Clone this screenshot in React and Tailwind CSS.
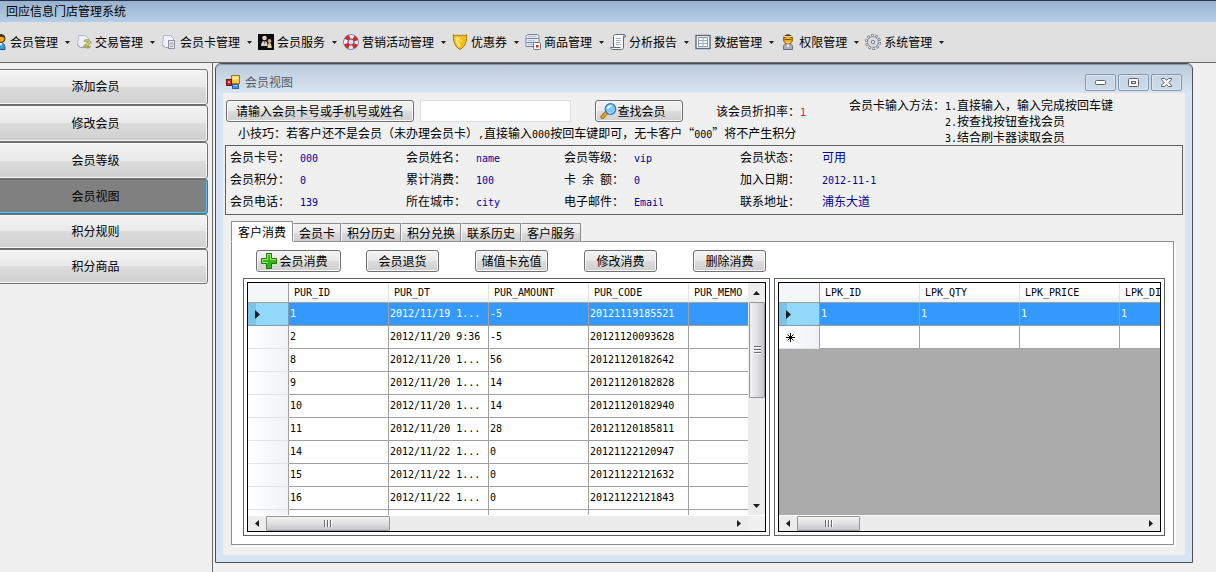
import React, { Fragment, useState } from 'react';

const GroupIcon = () => (
  <svg width="16" height="16" viewBox="0 0 16 16">
    <circle cx="10" cy="4.500" r="4" fill="#f3a51c" stroke="#2a2113" />
    <path d="M6.500 3.500c1-3.500 6.500-3.500 7.300.4-2-1.500-5-1.500-7.300-.4z" fill="#3a2a10" />
    <path d="M5 15.500c0-5 2-6.500 5-6.500s4 1.500 4 6.500z" fill="#3ea0dc" stroke="#184f7c" />
    <path d="M8.500 9l1.500 3L11.500 9z" fill="#fff" />
  </svg>
);

const TradeIcon = () => (
  <svg width="16" height="16" viewBox="0 0 16 16">
    <path d="M2.500 1.500h7l3 3v9h-8l-3-2z" fill="#eef0f8" stroke="#b3b5cc" />
    <path d="M1.500 11l3 2.500h5" fill="none" stroke="#9c9dbb" />
    <path d="M8 6.500c3-2 6-.5 6 1.500h1.500L13 10.500 10.500 8H12c-.5-1-2-1.200-4-.3z" fill="#c9cf5a" stroke="#84883a" strokeWidth=".6" />
    <path d="M15 12c-2 3-5.500 2.500-6 .5H7L10 9.500l2.500 3H11c.8 1 2.500.7 4-.5z" fill="#b9bf46" stroke="#84883a" strokeWidth=".6" />
  </svg>
);

const CardIcon = () => (
  <svg width="16" height="16" viewBox="0 0 16 16">
    <path d="M2.500 1.500h7l3 3v9h-8l-3-2z" fill="#f2f3fa" stroke="#b3b5cc" />
    <path d="M1.500 11l3 2.500h3" fill="none" stroke="#9c9dbb" />
    <rect x="7.500" y="6.500" width="6" height="8" fill="#e8e8f2" stroke="#8e90ae" />
    <path d="M9 9h3M9 12.500h3" stroke="#9a9cb8" />
    <path d="M8 10.500h5" stroke="#d9c46a" strokeWidth="1.500" />
  </svg>
);

const ServiceIcon = () => (
  <svg width="16" height="16" viewBox="0 0 16 16">
    <rect width="16" height="16" fill="#0b0a0c" />
    <circle cx="6.500" cy="4" r="2.300" fill="#e6d3c2" />
    <path d="M3 12c0-3 1-5 3.500-5S9.500 9 9.500 12z" fill="#cfd3dc" />
    <path d="M6 7h1.200l-.3 4z" fill="#4a3b38" />
    <circle cx="11.500" cy="7" r="1.900" fill="#dba77a" />
    <path d="M9.500 14c0-3 .5-5 2-5s2.200 2 2.200 5z" fill="#e8c79c" />
  </svg>
);

const RingIcon = () => (
  <svg width="16" height="16" viewBox="0 0 16 16">
    <circle cx="8" cy="8" r="5.300" fill="none" stroke="#5a5fae" strokeWidth="5" />
    <circle cx="8" cy="8" r="5.300" fill="none" stroke="#f4f2f6" strokeWidth="3.600" />
    <circle cx="8" cy="8" r="5.300" fill="none" stroke="#d3271e" strokeWidth="4" strokeDasharray="4.160 4.160" strokeDashoffset="-2.080" />
    <circle cx="8" cy="8" r="2.900" fill="none" stroke="#7c3a5c" strokeWidth=".7" />
  </svg>
);

const ShieldIcon = () => (
  <svg width="16" height="16" viewBox="0 0 16 16">
    <path d="M1.500.5c1 1 2 1.500 3 .8.8-.6 1.500-.3 2 .4h3c.5-.7 1.200-1 2-.4 1 .7 2 .2 3-.8.500 5.500-.5 11.500-6.500 15C2 12 1 6 1.500.5z" fill="#f2c01b" stroke="#a87400" />
    <path d="M3.500 3.500c1 0 1.500-.3 2-.7.800.8 1.700 1 2.500 1v9.500C4 10.500 3.500 7 3.500 3.500z" fill="#ffe678" />
    <path d="M5 6h6l-3 5z" fill="#f7d03a" />
  </svg>
);

const GoodsIcon = () => (
  <svg width="16" height="16" viewBox="0 0 16 16">
    <path d="M2.500.5h10l1.500 2v10h-13v-10z" fill="#eef1f6" stroke="#76859c" />
    <path d="M1.500 4.500h12M1.500 8.500h12" stroke="#76859c" />
    <path d="M3 2.500h8M3 6.500h7M3 10.500h5" stroke="#b9c6da" strokeWidth="1.500" />
    <rect x="8.500" y="8.500" width="7" height="7" rx="1" fill="#fff" stroke="#70747c" />
    <rect x="11" y="11" width="2.500" height="2.500" fill="#d8281e" />
  </svg>
);

const ReportIcon = () => (
  <svg width="16" height="16" viewBox="0 0 16 16">
    <path d="M3.500 2.500c0-1.200 1-2 2-2h8c1.600 0 2 1 2 2.500h-2v10c0 1.500-1 2.500-2 2.500h-9c-1.500 0-2-1-2-2h3z" fill="#f8f9fb" stroke="#5f6b7c" />
    <path d="M3.500 13.500h7M13.500 3c0-1 .3-2 1-2" fill="none" stroke="#5f6b7c" />
    <path d="M6 4.500h5M6 6.500h5M6 8.500h4M6 10.500h5" stroke="#a9b6c8" />
  </svg>
);

const DataIcon = () => (
  <svg width="16" height="16" viewBox="0 0 16 16">
    <rect x="1" y="1.500" width="14" height="13" fill="#fff" stroke="#5d6a7b" strokeWidth="1.400" />
    <rect x="3.500" y="3.500" width="9" height="9" fill="#f4f8fb" stroke="#8fa1b2" />
    <path d="M8 3.500v9M3.500 6.500h9M3.500 9.500h9" stroke="#9db0c0" />
  </svg>
);

const RoleIcon = () => (
  <svg width="16" height="16" viewBox="0 0 16 16">
    <path d="M3.500 15.500v-3c0-2 1.500-3 4.500-3s4.500 1 4.500 3v3z" fill="#a9aeb6" stroke="#666b73" />
    <circle cx="8" cy="5.500" r="4.500" fill="#f0a91c" stroke="#8a5a08" />
    <path d="M3.200 4.500C3.500 1.500 6 .5 8 .5s4.500 1 4.800 4L10 3H6z" fill="#4b3a1c" />
    <path d="M4 2.500h8" stroke="#e9d58c" />
    <path d="M4.500 5.500h7" stroke="#7a540f" />
    <path d="M6 8c1.300 1 2.700 1 4 0" fill="none" stroke="#fff2c0" />
    <path d="M6.500 10.500h3L8 14z" fill="#f1f2f4" />
  </svg>
);

const GearIcon = () => (
  <svg width="16" height="16" viewBox="0 0 16 16">
    <circle cx="8" cy="8" r="6.600" fill="none" stroke="#6f7780" strokeWidth="2.800" strokeDasharray="2.580 1.567" />
    <circle cx="8" cy="8" r="6.600" fill="none" stroke="#f2f3f4" strokeWidth="1.200" strokeDasharray="1.400 2.747" strokeDashoffset="-.6" />
    <circle cx="8" cy="8" r="5.200" fill="#eef0f2" stroke="#868d95" strokeWidth=".8" />
    <circle cx="8" cy="8" r="3.400" fill="#f6f7f8" stroke="#b7bcc2" strokeWidth=".8" />
    <circle cx="8" cy="8" r="1.800" fill="#dfe2e5" stroke="#6f7780" />
  </svg>
);

const FormIcon = () => (
  <svg width="15" height="15" viewBox="0 0 15 15">
    <rect x="5.500" y=".5" width="8" height="8" fill="#f7c948" stroke="#9a7a1e" />
    <rect x="6.500" y="1.500" width="6" height="3" fill="#fde79a" />
    <rect x=".5" y="4.500" width="5" height="6" fill="#b8281e" stroke="#6f1712" />
    <rect x="2" y="6" width="2" height="2" fill="#f0a79c" />
    <rect x="6.500" y="9.500" width="6" height="4" fill="#4f8fe0" stroke="#2c5ea3" />
    <path d="M7.500 10.500h4" stroke="#a9cbf5" />
  </svg>
);

const SearchIcon = () => (
  <svg width="17" height="16" viewBox="0 0 17 16">
    <path d="M6 10L2.500 14" stroke="#8a5a08" strokeWidth="4" strokeLinecap="round" />
    <path d="M6 10L2.500 14" stroke="#eaa51c" strokeWidth="2.600" strokeLinecap="round" />
    <circle cx="10.500" cy="6" r="5.300" fill="#7cc8f8" stroke="#2a78bd" strokeWidth="1.200" />
    <path d="M6.500 6c.4-3 2.500-4.200 5.500-4-.5 2.200-3 4-5.500 4z" fill="#e8f7ff" />
    <path d="M8 9.500c2 1.500 5 .5 6-2" fill="none" stroke="#bfe6fc" />
  </svg>
);

const PlusIcon = () => (
  <svg width="16" height="16" viewBox="0 0 16 16">
    <path d="M5.500.5h5v5h5v5h-5v5h-5v-5h-5v-5h5z" fill="#2fb514" stroke="#1d7508" />
    <path d="M6.500 10V9.500h-5v-3h5v-5h3v5h5v1" fill="none" stroke="#a6ec76" />
  </svg>
);

const Arrow = ({ points, w, h }) => (
  <svg width={w} height={h} viewBox={`0 0 ${w} ${h}`}>
    <polygon points={points} fill="#1c1c1c" />
  </svg>
);

const menus = [
  { label: '会员管理', icon: GroupIcon },
  { label: '交易管理', icon: TradeIcon },
  { label: '会员卡管理', icon: CardIcon },
  { label: '会员服务', icon: ServiceIcon },
  { label: '营销活动管理', icon: RingIcon },
  { label: '优惠券', icon: ShieldIcon },
  { label: '商品管理', icon: GoodsIcon },
  { label: '分析报告', icon: ReportIcon },
  { label: '数据管理', icon: DataIcon },
  { label: '权限管理', icon: RoleIcon },
  { label: '系统管理', icon: GearIcon },
];

const sideItems = [
  { label: '添加会员', height: 'h-9' },
  { label: '修改会员', height: 'h-[37px]' },
  { label: '会员等级', height: 'h-[37px]' },
  { label: '会员视图', height: 'h-[35px]' },
  { label: '积分规则', height: 'h-[35px]' },
  { label: '积分商品', height: 'h-[35px]' },
];

const memberInfo = [
  ['会员卡号：', '000'],
  ['会员姓名：', 'name'],
  ['会员等级：', 'vip'],
  ['会员状态：', '可用'],
  ['会员积分：', '0'],
  ['累计消费：', '100'],
  ['卡 余 额：', '0'],
  ['加入日期：', '2012-11-1'],
  ['会员电话：', '139'],
  ['所在城市：', 'city'],
  ['电子邮件：', 'Email'],
  ['联系地址：', '浦东大道'],
];

const tabs = ['客户消费', '会员卡', '积分历史', '积分兑换', '联系历史', '客户服务'];

const purchaseColumns = ['PUR_ID', 'PUR_DT', 'PUR_AMOUNT', 'PUR_CODE', 'PUR_MEMO'];
const purchases = [
  ['1', '2012/11/19 1...', '-5', '20121119185521', ''],
  ['2', '2012/11/20 9:36', '-5', '20121120093628', ''],
  ['8', '2012/11/20 1...', '56', '20121120182642', ''],
  ['9', '2012/11/20 1...', '14', '20121120182828', ''],
  ['10', '2012/11/20 1...', '14', '20121120182940', ''],
  ['11', '2012/11/20 1...', '28', '20121120185811', ''],
  ['14', '2012/11/22 1...', '0', '20121122120947', ''],
  ['15', '2012/11/22 1...', '0', '20121122121632', ''],
  ['16', '2012/11/22 1...', '0', '20121122121843', ''],
  ['', '', '', '', ''],
];

const giftColumns = ['LPK_ID', 'LPK_QTY', 'LPK_PRICE', 'LPK_DI'];
const gifts = [
  ['1', '1', '1', '1'],
  ['', '', '', ''],
];

// Latin text is set at half the width of a Chinese character
const Mono = ({ children }) => (
  <span className="font-['DejaVu_Sans_Mono',monospace] text-[10px] leading-none">{children}</span>
);

const Value = ({ text }) => (/^[\x00-\x7f]+$/.test(text) ? <Mono>{text}</Mono> : text);

const Label = ({ text }) =>
  text.split(' ').map((part, i) => (
    <Fragment key={i}>
      {i > 0 && <Mono> </Mono>}
      {part}
    </Fragment>
  ));

const FormButton = ({ children, className = '', onClick }) => (
  <button
    onClick={onClick}
    className={`flex h-[22px] items-center justify-center rounded-[3px] border border-[#707070] bg-[linear-gradient(#f3f3f3,#e9e9e9_50%,#dcdcdc_50%,#cfcfcf)] whitespace-nowrap shadow-[inset_0_0_0_1px_#f8f8f8] ${className}`}
  >
    {children}
  </button>
);

const HScroll = ({ thumb, corner }) => (
  <div className="flex h-4 shrink-0 border-t border-white bg-[#ececec]">
    <button aria-label="向左滚动" className="flex w-[18px] items-center justify-center">
      <Arrow w={4} h={7} points="4,0 4,7 0,3.5" />
    </button>
    <div className="flex-1">
      <div className={`flex h-[15px] items-center justify-center gap-px rounded-[1px] border border-[#979797] bg-linear-to-b from-[#f3f3f3] via-[#e0e0e2] to-[#c4c6ca] ${thumb}`}>
        {[0, 1, 2].map((i) => (
          <span key={i} className="h-[7px] w-0.5 border-r border-white bg-[#6b6b6b]" />
        ))}
      </div>
    </div>
    <button aria-label="向右滚动" className="flex w-[18px] items-center justify-center">
      <Arrow w={4} h={7} points="0,0 4,3.5 0,7" />
    </button>
    {corner && <div className="w-[17px] bg-[#f0f0f0]" />}
  </div>
);

const VScroll = () => (
  <div className="flex w-[17px] shrink-0 flex-col items-center bg-[#ececec]">
    <button aria-label="向上滚动" className="flex h-[19px] w-full items-center justify-center">
      <Arrow w={7} h={4} points="3.5,0 7,4 0,4" />
    </button>
    <div className="w-full flex-1 pl-px">
      <div className="flex h-24 w-full flex-col items-center justify-center gap-px rounded-[1px] border border-[#979797] bg-linear-to-r from-[#f3f3f3] via-[#e0e0e2] to-[#c4c6ca]">
        {[0, 1, 2].map((i) => (
          <span key={i} className="h-0.5 w-[7px] border-b border-white bg-[#6b6b6b]" />
        ))}
      </div>
    </div>
    <button aria-label="向下滚动" className="flex h-[18px] w-full items-center justify-center">
      <Arrow w={7} h={4} points="0,0 7,0 3.5,4" />
    </button>
  </div>
);

const DataGrid = ({ columns, rows, tableWidth, thumb, vertical, newRow }) => (
  <div className="flex min-w-0 border border-[#606060] p-[3px]">
    <div className="flex min-w-0 flex-1 flex-col border border-black">
      <div className="flex min-h-0 flex-1">
        <div className={`min-w-0 flex-1 overflow-hidden ${newRow ? 'bg-[#ababab]' : 'bg-white'}`}>
          <table className={`table-fixed border-separate border-spacing-0 font-['DejaVu_Sans_Mono',monospace] text-[10px] ${tableWidth}`}>
            <thead>
              <tr className="h-5">
                <th aria-label="行" className="w-[41px] border-r border-b border-[#a0a0a0] bg-[#f5f6f7]" />
                {columns.map((col) => (
                  <th
                    key={col}
                    scope="col"
                    className="w-[100px] border-r border-b border-r-[#e2e3e5] border-b-[#a0a0a0] bg-linear-to-b from-white from-50% to-[#f1f2f3] p-0 pl-[5px] text-left font-normal"
                  >
                    {col}
                  </th>
                ))}
              </tr>
            </thead>
            <tbody>
              {rows.map((row, i) => (
                <tr key={i} className="h-[23px]">
                  <th
                    scope="row"
                    aria-label={`第${i + 1}行`}
                    className={`border-r border-b p-0 pl-[7px] text-left ${
                      i === 0
                        ? 'border-[#8a9aa5] bg-linear-to-r from-[#7cc4e8] from-20% to-[#92d8fa] to-20%'
                        : 'border-r-[#a0a0a0] border-b-[#e0e2e5] bg-linear-to-r from-white to-[#f0f2f6]'
                    }`}
                  >
                    {i === 0 && <Arrow w={5} h={9} points="0,0 5,4.5 0,9" />}
                    {newRow && i === rows.length - 1 && (
                      <svg width="9" height="9" viewBox="0 0 9 9">
                        <path d="M4.500 0v9M0 4.500h9M1.500 1.500l6 6M7.500 1.500l-6 6" stroke="#000" />
                      </svg>
                    )}
                  </th>
                  {row.map((cell, j) => (
                    <td
                      key={j}
                      className={`truncate border-r border-b border-[#a0a0a0] p-0 pl-px ${
                        i === 0 ? 'bg-[#3399ff] text-white' : 'bg-white'
                      }`}
                    >
                      {cell}
                    </td>
                  ))}
                </tr>
              ))}
            </tbody>
          </table>
        </div>
        {vertical && <VScroll />}
      </div>
      <HScroll thumb={thumb} corner={vertical} />
    </div>
  </div>
);

const CaptionButton = ({ label, children }) => (
  <button aria-label={label} className="flex h-[17px] w-[31px] items-center justify-center rounded-xs border border-[#8296ad] bg-[#c8d6e5]/60 shadow-[inset_0_0_0_1px_#dbe6f1]">
    {children}
  </button>
);

const MemberWindow = () => {
  const [keyword, setKeyword] = useState('');
  const [activeTab, setActiveTab] = useState('客户消费');

  return (
    <section className="mr-[23px] mb-[9px] ml-0.5 flex min-w-0 flex-1 flex-col rounded-t-md border border-[#4b5058] bg-[#d7e4f1] px-[7px] pb-[7px]">
      <header className="-mx-[7px] flex h-[29px] shrink-0 items-center rounded-t-md border-t border-[#8d99a8] bg-linear-to-b from-[#bccbdb] to-[#d7e4f1] px-2.5 pt-1.5">
        <FormIcon />
        <h1 className="ml-1 flex-1 text-[#555b63]">会员视图</h1>
        <div className="flex gap-0.5">
          <CaptionButton label="最小化">
            <svg width="11" height="5" viewBox="0 0 11 5">
              <rect x=".5" y=".5" width="10" height="4" rx="1" fill="#fff" stroke="#5a6470" />
            </svg>
          </CaptionButton>
          <CaptionButton label="最大化">
            <svg width="11" height="9" viewBox="0 0 11 9">
              <rect x=".5" y=".5" width="10" height="8" rx="1" fill="#fff" stroke="#5a6470" />
              <rect x="3.500" y="3.500" width="4" height="2" fill="#d8e2ec" stroke="#5a6470" />
            </svg>
          </CaptionButton>
          <CaptionButton label="关闭">
            <svg width="11" height="9" viewBox="0 0 11 9">
              <path d="M.5.5h3l2 2 2-2h3v1.200L7.800 4.500l2.700 2.800v1.200h-3l-2-2-2 2h-3V7.300l2.700-2.800L.5 1.700z" fill="#fff" stroke="#5a6470" />
            </svg>
          </CaptionButton>
        </div>
      </header>

      <div className="flex min-h-0 flex-1 flex-col bg-[#f0f0f0] px-0.5">
        <div className="flex h-[52px] shrink-0">
          <div className="w-[624px] shrink-0 pt-[7px] pl-px">
            <div className="flex items-center">
              <FormButton className="w-[188px]">请输入会员卡号或手机号或姓名</FormButton>
              <input
                aria-label="会员卡号或手机号或姓名"
                value={keyword}
                onChange={(e) => setKeyword(e.target.value)}
                className="ml-1.5 h-[22px] w-[151px] border border-[#dcdfe4] bg-white px-1 outline-none"
              />
              <FormButton className="ml-6 w-[88px] pr-3">
                <SearchIcon />
                查找会员
              </FormButton>
              <p className="ml-[33px]">
                该会员折扣率：<span className="text-[#e02020]"><Mono>1</Mono></span>
              </p>
            </div>
            <p className="pt-0.5 pl-3 whitespace-nowrap">
              小技巧：若客户还不是会员（未办理会员卡）<Mono>,</Mono>直接输入<Mono>000</Mono>按回车键即可，无卡客户“<Mono>000</Mono>”将不产生积分
            </p>
          </div>
          <div className="flex pt-1 leading-4">
            <p>会员卡输入方法：</p>
            <ol>
              <li className="h-4"><Mono>1.</Mono>直接输入，输入完成按回车键</li>
              <li className="h-4"><Mono>2.</Mono>按查找按钮查找会员</li>
              <li className="h-4"><Mono>3.</Mono>结合刷卡器读取会员</li>
            </ol>
          </div>
        </div>

        <dl className="grid h-[70px] shrink-0 auto-rows-[22px] grid-cols-[176px_158px_176px_1fr] border border-[#5f5f5f] pl-1">
          {memberInfo.map(([label, value], i) => (
            <div key={label} className="flex items-center">
              <dt className={`shrink-0 whitespace-pre ${i % 4 === 3 ? 'w-[82px]' : 'w-[70px]'}`}>
                <Label text={label} />
              </dt>
              <dd className="text-[#00009c]"><Value text={value} /></dd>
            </div>
          ))}
        </dl>

        <div className="flex min-h-0 flex-1 flex-col pt-1.5 pr-[9px] pb-2.5 pl-1.5">
          <div role="tablist" className="z-10 -mb-px flex shrink-0 items-end">
            {tabs.map((tab) => (
              <button
                key={tab}
                role="tab"
                aria-selected={tab === activeTab}
                onClick={() => setActiveTab(tab)}
                className={`border border-[#8c8e94] ${
                  tab === activeTab
                    ? 'h-[21px] border-b-white bg-white px-1.5'
                    : 'h-[19px] border-l-[#f6f6f6] bg-[linear-gradient(#f3f3f3,#e9e9e9_50%,#dcdcdc_50%,#cfcfcf)] px-[5px]'
                }`}
              >
                {tab}
              </button>
            ))}
          </div>

          <div role="tabpanel" className="flex min-h-0 flex-1 flex-col border border-[#8c8e94] bg-white pr-2 pb-2 pl-[11px] shadow-[2px_2px_0_#fafafa]">
            <div className="flex shrink-0 gap-9 pt-2 pl-[13px]">
              <div className="flex gap-[25px]">
                <FormButton className="w-[85px] pr-2">
                  <PlusIcon />
                  <span className="ml-0.5">会员消费</span>
                </FormButton>
                <FormButton className="w-[73px]">会员退货</FormButton>
              </div>
              <FormButton className="w-[73px]">储值卡充值</FormButton>
              <FormButton className="w-[73px]">修改消费</FormButton>
              <FormButton className="w-[73px]">删除消费</FormButton>
            </div>
            <div className="mt-1.5 grid min-h-0 flex-1 grid-cols-[527fr_391fr] grid-rows-1 gap-1">
              <DataGrid columns={purchaseColumns} rows={purchases} tableWidth="w-[541px]" thumb="w-[124px]" vertical />
              <DataGrid columns={giftColumns} rows={gifts} tableWidth="w-[441px]" thumb="w-[63px]" newRow />
            </div>
          </div>
        </div>
      </div>
    </section>
  );
};

export default function App() {
  const [activeItem, setActiveItem] = useState('会员视图');

  return (
    <div className="flex h-screen flex-col overflow-hidden bg-[#f0f0f0] font-['Noto_Sans_CJK_SC',sans-serif] text-[12px] leading-[18px] text-black">
      <div className="flex h-[22px] shrink-0 items-center border-t border-[#26344d] bg-linear-to-b from-[#98b1cf] to-[#b5cee7] pb-0.5 pl-1.5">
        回应信息门店管理系统
      </div>

      <nav className="flex h-10 shrink-0 items-center overflow-hidden bg-[#e0e0e0]">
        <div className="-ml-[9px] flex">
          {menus.map((menu) => (
            <button key={menu.label} className="flex shrink-0 items-center pr-1.5 whitespace-nowrap">
              <menu.icon />
              <span className="mr-[7px] ml-[3px]">{menu.label}</span>
              <Arrow w={5} h={3} points="0,0 5,0 2.5,3" />
            </button>
          ))}
        </div>
      </nav>

      <div className="flex min-h-0 flex-1 border-t border-[#6a6a6a]">
        <aside className="w-[213px] shrink-0 overflow-hidden border-r border-[#6a6a6a] pt-1.5 pr-1">
          <div className="-ml-[17px] flex flex-col">
            {sideItems.map((item) => (
              <button
                key={item.label}
                onClick={() => setActiveItem(item.label)}
                className={`rounded-[3px] border pb-0.5 ${item.height} ${
                  item.label === activeItem
                    ? 'border-[#2c7fa8] border-t-[#707070] bg-[#808080] shadow-[inset_-1px_-1px_0_0_#5cc0ea]'
                    : 'border-[#707070] bg-[linear-gradient(#f3f3f3,#e9e9e9_50%,#dcdcdc_50%,#cfcfcf)] shadow-[inset_0_0_0_1px_#f8f8f8]'
                }`}
              >
                {item.label}
              </button>
            ))}
          </div>
        </aside>
        <MemberWindow />
      </div>
    </div>
  );
}
